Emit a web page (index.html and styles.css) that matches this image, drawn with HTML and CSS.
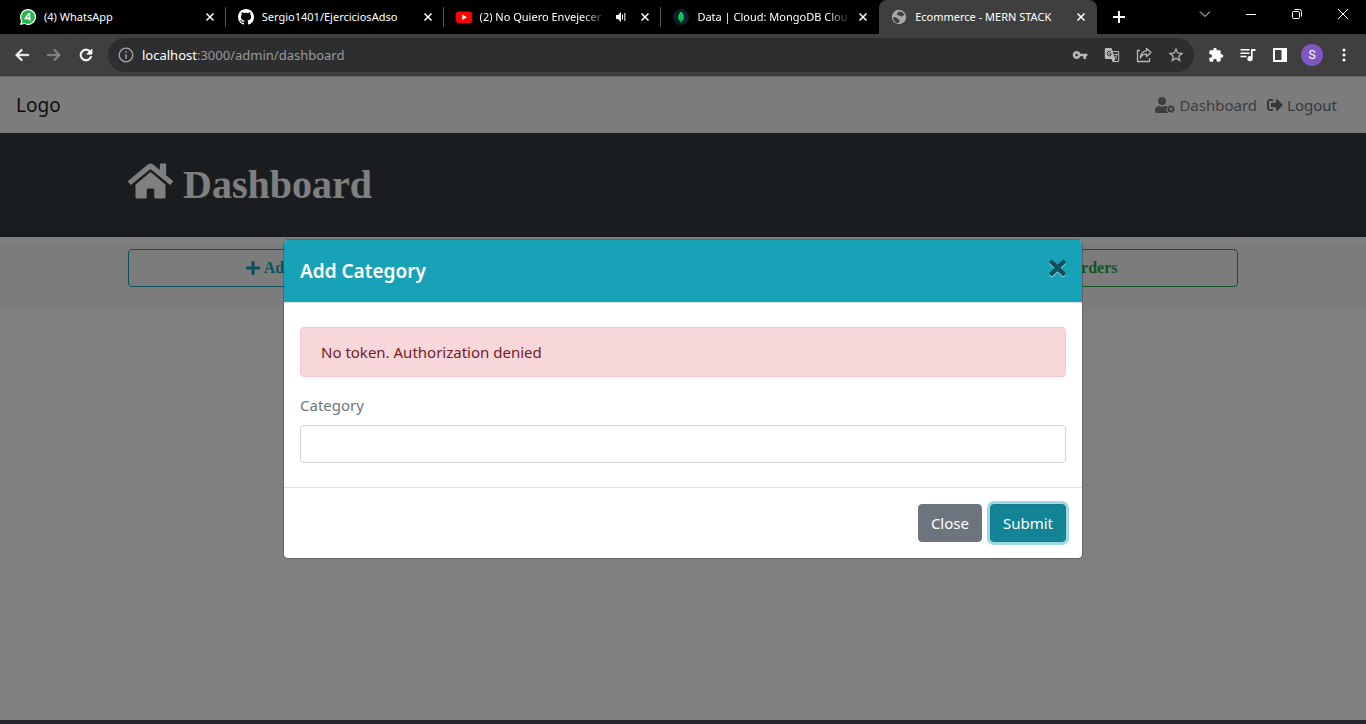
FILE: index.html
```html
<!DOCTYPE html>
<html lang="en">
<head>
<meta charset="utf-8">
<title>Ecommerce - MERN STACK</title>
<link rel="stylesheet" href="styles.css">
</head>
<body>
<div class="browser">
  <header class="tabstrip">
    <div class="tabs">
      <div class="tab">
        <svg class="favicon" viewBox="0 0 16 16"><path fill="#fff" d="M8 0a8 8 0 1 1-3.600 15.100L0 16l1-4.200A8 8 0 0 1 8 0z"/><path fill="#22b84c" d="M8 1.200a6.800 6.800 0 1 1-3.400 12.700l-2.900.6.700-2.800A6.800 6.800 0 0 1 8 1.200z"/><path d="M9.500 11.500V4.700H8.600L5.400 9.600h5.400" fill="none" stroke="#fff" stroke-width="1.500"/></svg>
        <span class="tab-title">(4) WhatsApp</span>
        <button class="tab-close" aria-label="Close tab"><svg viewBox="0 0 10 10"><path d="M1.500 1.500l7 7M8.500 1.500l-7 7"/></svg></button>
      </div>
      <div class="tab">
        <svg class="favicon" viewBox="0 0 16 16"><path fill="#fff" d="M8 0C3.580 0 0 3.580 0 8c0 3.540 2.290 6.530 5.470 7.590.4.070.55-.17.55-.38 0-.19-.01-.82-.01-1.490-2.010.37-2.530-.49-2.690-.94-.09-.23-.48-.94-.82-1.130-.28-.15-.68-.52-.01-.53.63-.01 1.080.58 1.230.82.72 1.210 1.870.87 2.330.66.070-.52.28-.87.51-1.070-1.780-.2-3.640-.89-3.640-3.950 0-.87.31-1.590.82-2.150-.08-.2-.36-1.020.08-2.120 0 0 .67-.21 2.200.82.64-.18 1.320-.27 2-.27.68 0 1.360.09 2 .27 1.530-1.040 2.200-.82 2.200-.82.44 1.100.16 1.920.08 2.120.51.56.82 1.270.82 2.150 0 3.070-1.870 3.750-3.650 3.950.29.25.54.73.54 1.480 0 1.070-.01 1.930-.01 2.200 0 .21.15.46.55.38A8 8 0 0 0 16 8c0-4.420-3.580-8-8-8z"/></svg>
        <span class="tab-title">Sergio1401/EjerciciosAdso</span>
        <button class="tab-close" aria-label="Close tab"><svg viewBox="0 0 10 10"><path d="M1.500 1.500l7 7M8.500 1.500l-7 7"/></svg></button>
      </div>
      <div class="tab">
        <svg class="favicon" viewBox="0 0 16 16"><rect y="2.500" width="16" height="11.500" rx="2.500" fill="#f00"/><path d="M6.300 5.500v5.400L11 8.200z" fill="#fff"/></svg>
        <span class="tab-title fade">(2) No Quiero Envejecer</span>
        <svg class="audio" viewBox="0 0 12 12"><path fill="#fff" d="M1 4h2l3-3v10L3 8H1z"/><path d="M7.500 3.500v5M9.800 2v8" stroke="#fff" stroke-width="1"/></svg>
        <button class="tab-close" aria-label="Close tab"><svg viewBox="0 0 10 10"><path d="M1.500 1.500l7 7M8.500 1.500l-7 7"/></svg></button>
      </div>
      <div class="tab">
        <svg class="favicon" viewBox="0 0 16 16"><circle cx="8" cy="8" r="8" fill="#07202c"/><path d="M8 2.500c4 4 3.400 8 0 10.500-3.400-2.500-4-6.500 0-10.500z" fill="#10d65a"/><path d="M8 5v9" stroke="#0a9444" stroke-width=".8"/></svg>
        <span class="tab-title fade">Data | Cloud: MongoDB Clou</span>
        <button class="tab-close" aria-label="Close tab"><svg viewBox="0 0 10 10"><path d="M1.500 1.500l7 7M8.500 1.500l-7 7"/></svg></button>
      </div>
      <div class="tab active">
        <svg class="favicon" viewBox="0 0 16 16"><circle cx="8" cy="8" r="7.200" fill="#a5a8ac"/><path d="M8.500 2.500c2 .2 4 1 5 3.500-1.500 0-1.500 1.500-3 1.500S8.500 6 7 6.300 6 4 7 3.500zM2 8.500c2-.5 4 .2 4.500 1.200s2.500.5 2 2.300-1 1.500-1.500 2.300C4 13.500 2.200 11 2 8.500z" fill="#3f3f3f"/></svg>
        <span class="tab-title">Ecommerce - MERN STACK</span>
        <button class="tab-close" aria-label="Close tab"><svg viewBox="0 0 10 10"><path d="M1.500 1.500l7 7M8.500 1.500l-7 7"/></svg></button>
      </div>
    </div>
    <button class="new-tab" aria-label="New tab"><svg viewBox="0 0 12 12"><path d="M6 0v12M0 6h12" stroke="#fff" stroke-width="2"/></svg></button>
    <div class="window-controls">
      <button aria-label="Search tabs"><svg viewBox="0 0 12 12"><path d="M1 3.500l5 5 5-5"/></svg></button>
      <button aria-label="Minimize"><svg viewBox="0 0 12 12"><path d="M1 6.500h10"/></svg></button>
      <button aria-label="Restore"><svg viewBox="0 0 12 12"><rect x="1.500" y="3.500" width="7" height="7" rx="1"/><path d="M3.500 1.500h5a2 2 0 0 1 2 2v5"/></svg></button>
      <button aria-label="Close window"><svg viewBox="0 0 12 12"><path d="M1 1l10 10M11 1L1 11"/></svg></button>
    </div>
  </header>

  <div class="toolbar">
    <button class="tool" aria-label="Back"><svg viewBox="0 0 24 24"><path d="M21 11H7.200l5.600-5.600L11.300 4l-8 8 8 8 1.500-1.400L7.200 13H21z" stroke="#fff" stroke-width=".8"/></svg></button>
    <button class="tool off" aria-label="Forward"><svg viewBox="0 0 24 24"><path d="M3 11h13.800l-5.600-5.600L12.700 4l8 8-8 8-1.500-1.400 5.600-5.600H3z" stroke="#8a8a8a" stroke-width=".8"/></svg></button>
    <button class="tool" aria-label="Reload"><svg viewBox="0 0 24 24"><path d="M17.650 6.350C16.200 4.900 14.210 4 12 4c-4.420 0-7.990 3.580-7.990 8s3.570 8 7.990 8c3.730 0 6.840-2.550 7.730-6h-2.080c-.82 2.330-3.040 4-5.650 4-3.310 0-6-2.690-6-6s2.690-6 6-6c1.660 0 3.140.69 4.220 1.780L13 11h7V4l-2.350 2.350z" stroke="#fff" stroke-width=".8"/></svg></button>
    <div class="omnibox">
      <button class="tool muted" aria-label="Site information"><svg viewBox="0 0 24 24"><path d="M11 7h2v2h-2zm0 4h2v6h-2zm1-9a10 10 0 1 0 0 20 10 10 0 0 0 0-20zm0 18.200a8.200 8.200 0 1 1 0-16.400 8.200 8.200 0 0 1 0 16.400z"/></svg></button>
      <span class="url"><span class="host">localhost</span>:3000/admin/dashboard</span>
      <button class="tool light" aria-label="Passwords"><svg class="small" viewBox="0 0 24 24"><path d="M12.650 10C11.830 7.670 9.610 6 7 6c-3.310 0-6 2.690-6 6s2.690 6 6 6c2.610 0 4.830-1.670 5.650-4H17v4h4v-4h2v-4H12.650zM7 14c-1.100 0-2-.9-2-2s.9-2 2-2 2 .9 2 2-.9 2-2 2z"/></svg></button>
      <button class="tool light" aria-label="Translate this page"><svg class="small" viewBox="0 0 16 16"><path d="M2 1h5.500l1 3H14a1.200 1.200 0 0 1 1.200 1.200v8.600A1.200 1.200 0 0 1 14 15H8.500l-1-3H2A1.200 1.200 0 0 1 .8 10.800V2.200A1.200 1.200 0 0 1 2 1zm6.800 4l2.700 8-2 1h4.200c.3 0 .5-.2.5-.5v-8c0-.3-.2-.5-.5-.5z"/><path d="M7 5A2.200 2.200 0 1 0 7 8V6.700H5.200" fill="none" stroke="#2d2e30" stroke-width="1"/><path d="M9.500 7.500H14M11.800 6.500v1M13 7.500c-.5 2-1.500 3-2.500 3.500M11 9c.6 1.200 1.300 2.200 2.300 2.900" fill="none" stroke="#b9b9b9" stroke-width=".8"/></svg></button>
      <button class="tool light" aria-label="Share"><svg class="small" viewBox="0 0 16 16"><path d="M4 3.500H1.500v11h12V11M10.500 1.500l4.500 4-4.500 4V7.200C7.500 7 5.500 8.500 4.300 11c.3-4 2.500-6.800 6.200-7.200z" fill="none" stroke="#b9b9b9" stroke-width="1.300" stroke-linejoin="round"/></svg></button>
      <button class="tool light" aria-label="Bookmark"><svg viewBox="0 0 24 24"><path d="M22 9.240l-7.190-.62L12 2 9.190 8.630 2 9.240l5.460 4.730L5.820 21 12 17.270 18.180 21l-1.630-7.030L22 9.240zM12 15.400l-3.760 2.270 1-4.280-3.320-2.880 4.380-.38L12 6.100l1.710 4.040 4.380.38-3.320 2.880 1 4.280L12 15.400z"/></svg></button>
    </div>
    <button class="tool" aria-label="Extensions"><svg class="small" viewBox="0 0 24 24"><path d="M20.500 11H19V7c0-1.100-.9-2-2-2h-4V3.500a2.500 2.500 0 0 0-5 0V5H4c-1.100 0-2 .9-2 2v3.800h1.500a2.700 2.700 0 0 1 0 5.400H2V20c0 1.100.9 2 2 2h3.800v-1.500a2.700 2.700 0 0 1 5.400 0V22H17c1.100 0 2-.9 2-2v-4h1.500a2.500 2.500 0 0 0 0-5z"/></svg></button>
    <button class="tool" aria-label="Media controls"><svg viewBox="0 0 24 24"><path d="M14 4H2v2h12zm0 4.500H2v2h12zM2 15h8v-2H2zM16 4v9.700a3.500 3.500 0 1 0 2.200 3.300V6.500H22V4z"/></svg></button>
    <button class="tool" aria-label="Side panel"><svg class="small" viewBox="0 0 16 16"><path d="M1 1h14v14H1zm2 2v10h6.500V3z" fill-rule="evenodd"/></svg></button>
    <button class="tool" aria-label="Profile"><span class="avatar">S</span></button>
    <button class="tool" aria-label="Menu"><svg viewBox="0 0 18 18"><circle cx="9" cy="4" r="1.500"/><circle cx="9" cy="9" r="1.500"/><circle cx="9" cy="14" r="1.500"/></svg></button>
  </div>

  <div class="viewport">
    <nav class="navbar">
      <a class="brand" href="#">Logo</a>
      <a class="nav-link" href="#"><svg viewBox="0 0 640 512" width="20" height="16"><path d="M224 256a128 128 0 1 0 0-256 128 128 0 0 0 0 256zM313 288c-30 14-59 16-89 16s-60-2-89-16C60 288 0 348 0 422v42c0 27 21 48 48 48h352c12 0 20-4 28-10-40-25-64-60-64-110 0-40 12-70 35-92-22-9-50-12-86-12z"/><circle cx="512" cy="384" r="72" fill="none" stroke="currentColor" stroke-width="58"/><circle cx="512" cy="384" r="108" fill="none" stroke="currentColor" stroke-width="34" stroke-dasharray="57 56"/></svg>Dashboard</a>
      <a class="nav-link strong" href="#"><svg viewBox="0 0 512 512" width="16" height="16"><path d="M497 273L329 441c-15 15-41 4.500-41-17v-96H152c-13.300 0-24-10.700-24-24v-96c0-13.300 10.700-24 24-24h136V88c0-21.400 25.900-32 41-17l168 168c9.300 9.400 9.300 24.600 0 34zM192 436v-40c0-6.600-5.400-12-12-12H96c-17.700 0-32-14.300-32-32V160c0-17.700 14.300-32 32-32h84c6.600 0 12-5.400 12-12V76c0-6.600-5.400-12-12-12H96c-53 0-96 43-96 96v192c0 53 43 96 96 96h84c6.600 0 12-5.400 12-12z"/></svg>Logout</a>
    </nav>
    <div class="banner">
      <div class="container">
        <h1><svg viewBox="0 0 576 512" width="45" height="40"><path d="M280.370 148.260L96 300.110V464a16 16 0 0 0 16 16l112.060-.29a16 16 0 0 0 15.920-16V368a16 16 0 0 1 16-16h64a16 16 0 0 1 16 16v95.640a16 16 0 0 0 16 16.050L464 480a16 16 0 0 0 16-16V300L295.670 148.260a12.190 12.190 0 0 0-15.300 0zM571.600 251.470L488 182.560V44.050a12 12 0 0 0-12-12h-56a12 12 0 0 0-12 12v72.610L318.470 43a48 48 0 0 0-61 0L4.340 251.470a12 12 0 0 0-1.600 16.900l25.500 31A12 12 0 0 0 45.150 301l235.220-193.740a12.190 12.190 0 0 1 15.300 0L530.900 301a12 12 0 0 0 16.900-1.600l25.500-31a12 12 0 0 0-1.700-16.930z"/></svg>Dashboard</h1>
      </div>
    </div>
    <section class="actions">
      <div class="container action-row">
        <button class="btn outline-info"><svg viewBox="0 0 448 512" width="14" height="16"><path d="M416 208H272V64c0-17.670-14.330-32-32-32h-32c-17.670 0-32 14.330-32 32v144H32c-17.670 0-32 14.330-32 32v32c0 17.670 14.330 32 32 32h144v144c0 17.670 14.330 32 32 32h32c17.670 0 32-14.330 32-32V304h144c17.670 0 32-14.330 32-32v-32c0-17.670-14.330-32-32-32z"/></svg>Add Category</button>
        <button class="btn outline-success"><svg viewBox="0 0 576 512" width="18" height="16"><path d="M0 64h96l16 64h448l-56 224H168l8 48h320v48H136L64 112H0z"/></svg>View Orders</button>
      </div>
    </section>

    <div class="backdrop">
      <form class="modal" role="dialog" aria-labelledby="modal-title">
        <div class="modal-header">
          <h2 id="modal-title">Add Category</h2>
          <button type="button" class="dismiss" aria-label="Close dialog"><svg viewBox="0 0 352 512" width="17" height="24"><path d="M242.720 256l100.070-100.070c12.280-12.280 12.280-32.190 0-44.480l-22.240-22.240c-12.280-12.280-32.190-12.280-44.480 0L176 189.280 75.930 89.210c-12.280-12.280-32.190-12.280-44.480 0L9.210 111.450c-12.280 12.280-12.280 32.190 0 44.480L109.280 256 9.210 356.070c-12.280 12.280-12.280 32.190 0 44.480l22.240 22.240c12.280 12.280 32.200 12.280 44.480 0L176 322.720l100.070 100.070c12.280 12.280 32.200 12.280 44.480 0l22.240-22.240c12.280-12.280 12.280-32.190 0-44.480L242.720 256z"/></svg></button>
        </div>
        <div class="modal-body">
          <div class="alert" role="alert">No token. Authorization denied</div>
          <label for="category">Category</label>
          <input id="category" type="text">
        </div>
        <div class="modal-footer">
          <button type="button" class="btn secondary">Close</button>
          <button type="button" class="btn info">Submit</button>
        </div>
      </form>
    </div>
  </div>
  <footer class="screen-edge"></footer>
</div>
</body>
</html>
```

FILE: styles.css
```css
* { box-sizing: border-box; }

body {
  margin: 0;
  font: 15px/24px "Noto Sans", "Open Sans", sans-serif;
  color: #212529;
}

button {
  padding: 0;
  border: 0;
  background: none;
  color: inherit;
  font: inherit;
}

a { text-decoration: none; }

.browser {
  display: flex;
  flex-direction: column;
  min-height: 100vh;
}

/* Tab strip */
.tabstrip {
  display: flex;
  height: 34px;
  padding-left: 8px;
  background: #000;
  color: #fff;
}

.tabs { display: flex; flex: 0 1 1089px; min-width: 0; }

.tab {
  display: flex;
  flex: 1 1 0;
  align-items: center;
  min-width: 0;
  padding: 0 8px 0 12px;
  font-size: 11px;
  line-height: 16px;
  background: linear-gradient(#555, #555) right center / 1px 20px no-repeat;
}

.tab:nth-last-child(2) { background: none; }

.tab.active {
  border-radius: 8px 8px 0 0;
  background: #3f3f3f;
}

.favicon { flex: none; width: 16px; height: 16px; margin-right: 8px; }

.tab-title { flex: 1; min-width: 0; overflow: hidden; white-space: nowrap; }

.tab-title.fade { mask-image: linear-gradient(to left, transparent, #000 24px); }

.audio { flex: none; width: 12px; height: 12px; margin: 0 6px 0 8px; }

.tab-close {
  display: grid;
  place-items: center;
  flex: none;
  width: 16px;
  height: 16px;
  margin-left: 4px;
}

.tab-close svg { width: 10px; height: 10px; stroke: #fff; stroke-width: 1.5; }

.new-tab { display: grid; place-items: center; width: 44px; }
.new-tab svg { width: 12px; height: 12px; }

.window-controls { display: flex; height: 28px; margin-left: auto; }
.window-controls button { display: grid; place-items: center; width: 46px; }
.window-controls svg { width: 12px; height: 12px; fill: none; stroke: #fff; stroke-width: 1; }

/* Toolbar */
.toolbar {
  display: flex;
  align-items: center;
  height: 42px;
  padding: 0 6px;
  background: #3f3f3f;
}

.tool {
  display: grid;
  place-items: center;
  flex: none;
  width: 32px;
  height: 32px;
}

.tool svg { width: 18px; height: 18px; fill: #fff; }
.tool .small { width: 16px; height: 16px; }
.tool.off svg { fill: #8a8a8a; }
.tool.muted svg { fill: #a0a3a7; }
.tool.light svg { fill: #b9b9b9; }

.omnibox {
  display: flex;
  flex: 1;
  align-items: center;
  height: 34px;
  margin: 0 6px;
  padding: 0 2px;
  border-radius: 17px;
  background: #2d2e30;
}

.url { flex: 1; font-size: 13px; color: #9a9a9a; }
.host { color: #fff; }

.avatar {
  width: 22px;
  height: 22px;
  border-radius: 50%;
  background: #7e57c2;
  color: #fff;
  font: 12px/22px Roboto, sans-serif;
  text-align: center;
}

/* Page */
.viewport {
  position: relative;
  flex: 1;
  background: #fff;
}

.navbar {
  display: flex;
  align-items: center;
  height: 57px;
  padding: 0 29px 0 16px;
  border-top: 1px solid #ccc;
  background: #f8f9fa;
}

.brand { margin-right: auto; color: #1a1a1a; font-size: 19px; line-height: 30px; }

.nav-link {
  display: flex;
  align-items: center;
  gap: 4px;
  margin-left: 10px;
  color: #7b7c7d;
}

.nav-link svg { fill: currentColor; }
.nav-link.strong { color: #6c7278; }

.container { width: 100%; max-width: 1140px; margin: 0 auto; padding: 0 15px; }

.banner { padding: 28px 0; background: #343a40; color: #fff; }

.banner h1 {
  display: flex;
  align-items: flex-start;
  gap: 10px;
  margin: 0;
  font: bold 40px/48px "Liberation Serif", serif;
}

.banner svg { fill: #fff; }

.actions { margin-top: 8px; padding: 4px 0 20px; background: #f8f9fa; }

.action-row { display: grid; grid-template-columns: repeat(3, 1fr); gap: 30px; }

.btn {
  display: flex;
  align-items: center;
  justify-content: center;
  gap: 4px;
  height: 38px;
  padding: 0 12px;
  border: 1px solid;
  border-radius: 4px;
}

.btn svg { fill: currentColor; }

.outline-info, .outline-success { font: bold 16px/24px "Liberation Serif", serif; }
.outline-info { color: #17a2b8; }
.outline-success { grid-column: 3; color: #28a745; }

/* Dialog */
.backdrop {
  position: absolute;
  inset: 0;
  display: flex;
  align-items: center;
  justify-content: center;
  padding-top: 2px;
  background: rgba(0, 0, 0, 0.5);
}

.modal {
  width: 100%;
  max-width: 800px;
  border: 1px solid rgba(0, 0, 0, 0.2);
  border-radius: 5px;
  background: #fff;
  background-clip: padding-box;
}

.modal-header {
  display: flex;
  justify-content: space-between;
  padding: 16px;
  border-bottom: 1px solid #dee2e6;
  border-radius: 4px 4px 0 0;
  background: #17a2b8;
}

.modal-header h2 { margin: 0; color: #fff; font-size: 19px; font-weight: 600; line-height: 30px; }

.dismiss { align-self: flex-start; height: 24px; }
.dismiss svg { display: block; fill: #0c515c; filter: drop-shadow(0 1px 0 #a0e0ea); }

.modal-body { display: flex; flex-direction: column; padding: 24px 16px; }

.alert {
  margin-bottom: 16px;
  padding: 12px 20px;
  border: 1px solid #f5c6cb;
  border-radius: 4px;
  background: #f8d7da;
  color: #721c24;
}

.modal-body label { margin-bottom: 8px; color: #6c757d; }

.modal-body input {
  height: 38px;
  padding: 0 12px;
  border: 1px solid #ced4da;
  border-radius: 4px;
  font: inherit;
}

.modal-footer {
  display: flex;
  justify-content: flex-end;
  gap: 8px;
  padding: 16px;
  border-top: 1px solid #dee2e6;
}

.secondary { border-color: #6c757d; background: #6c757d; color: #fff; }

.info {
  border-color: #117a8b;
  background: #138496;
  color: #fff;
  box-shadow: 0 0 0 3px #9fd9e2;
}

.screen-edge { height: 4px; background: #25252b; }
```
